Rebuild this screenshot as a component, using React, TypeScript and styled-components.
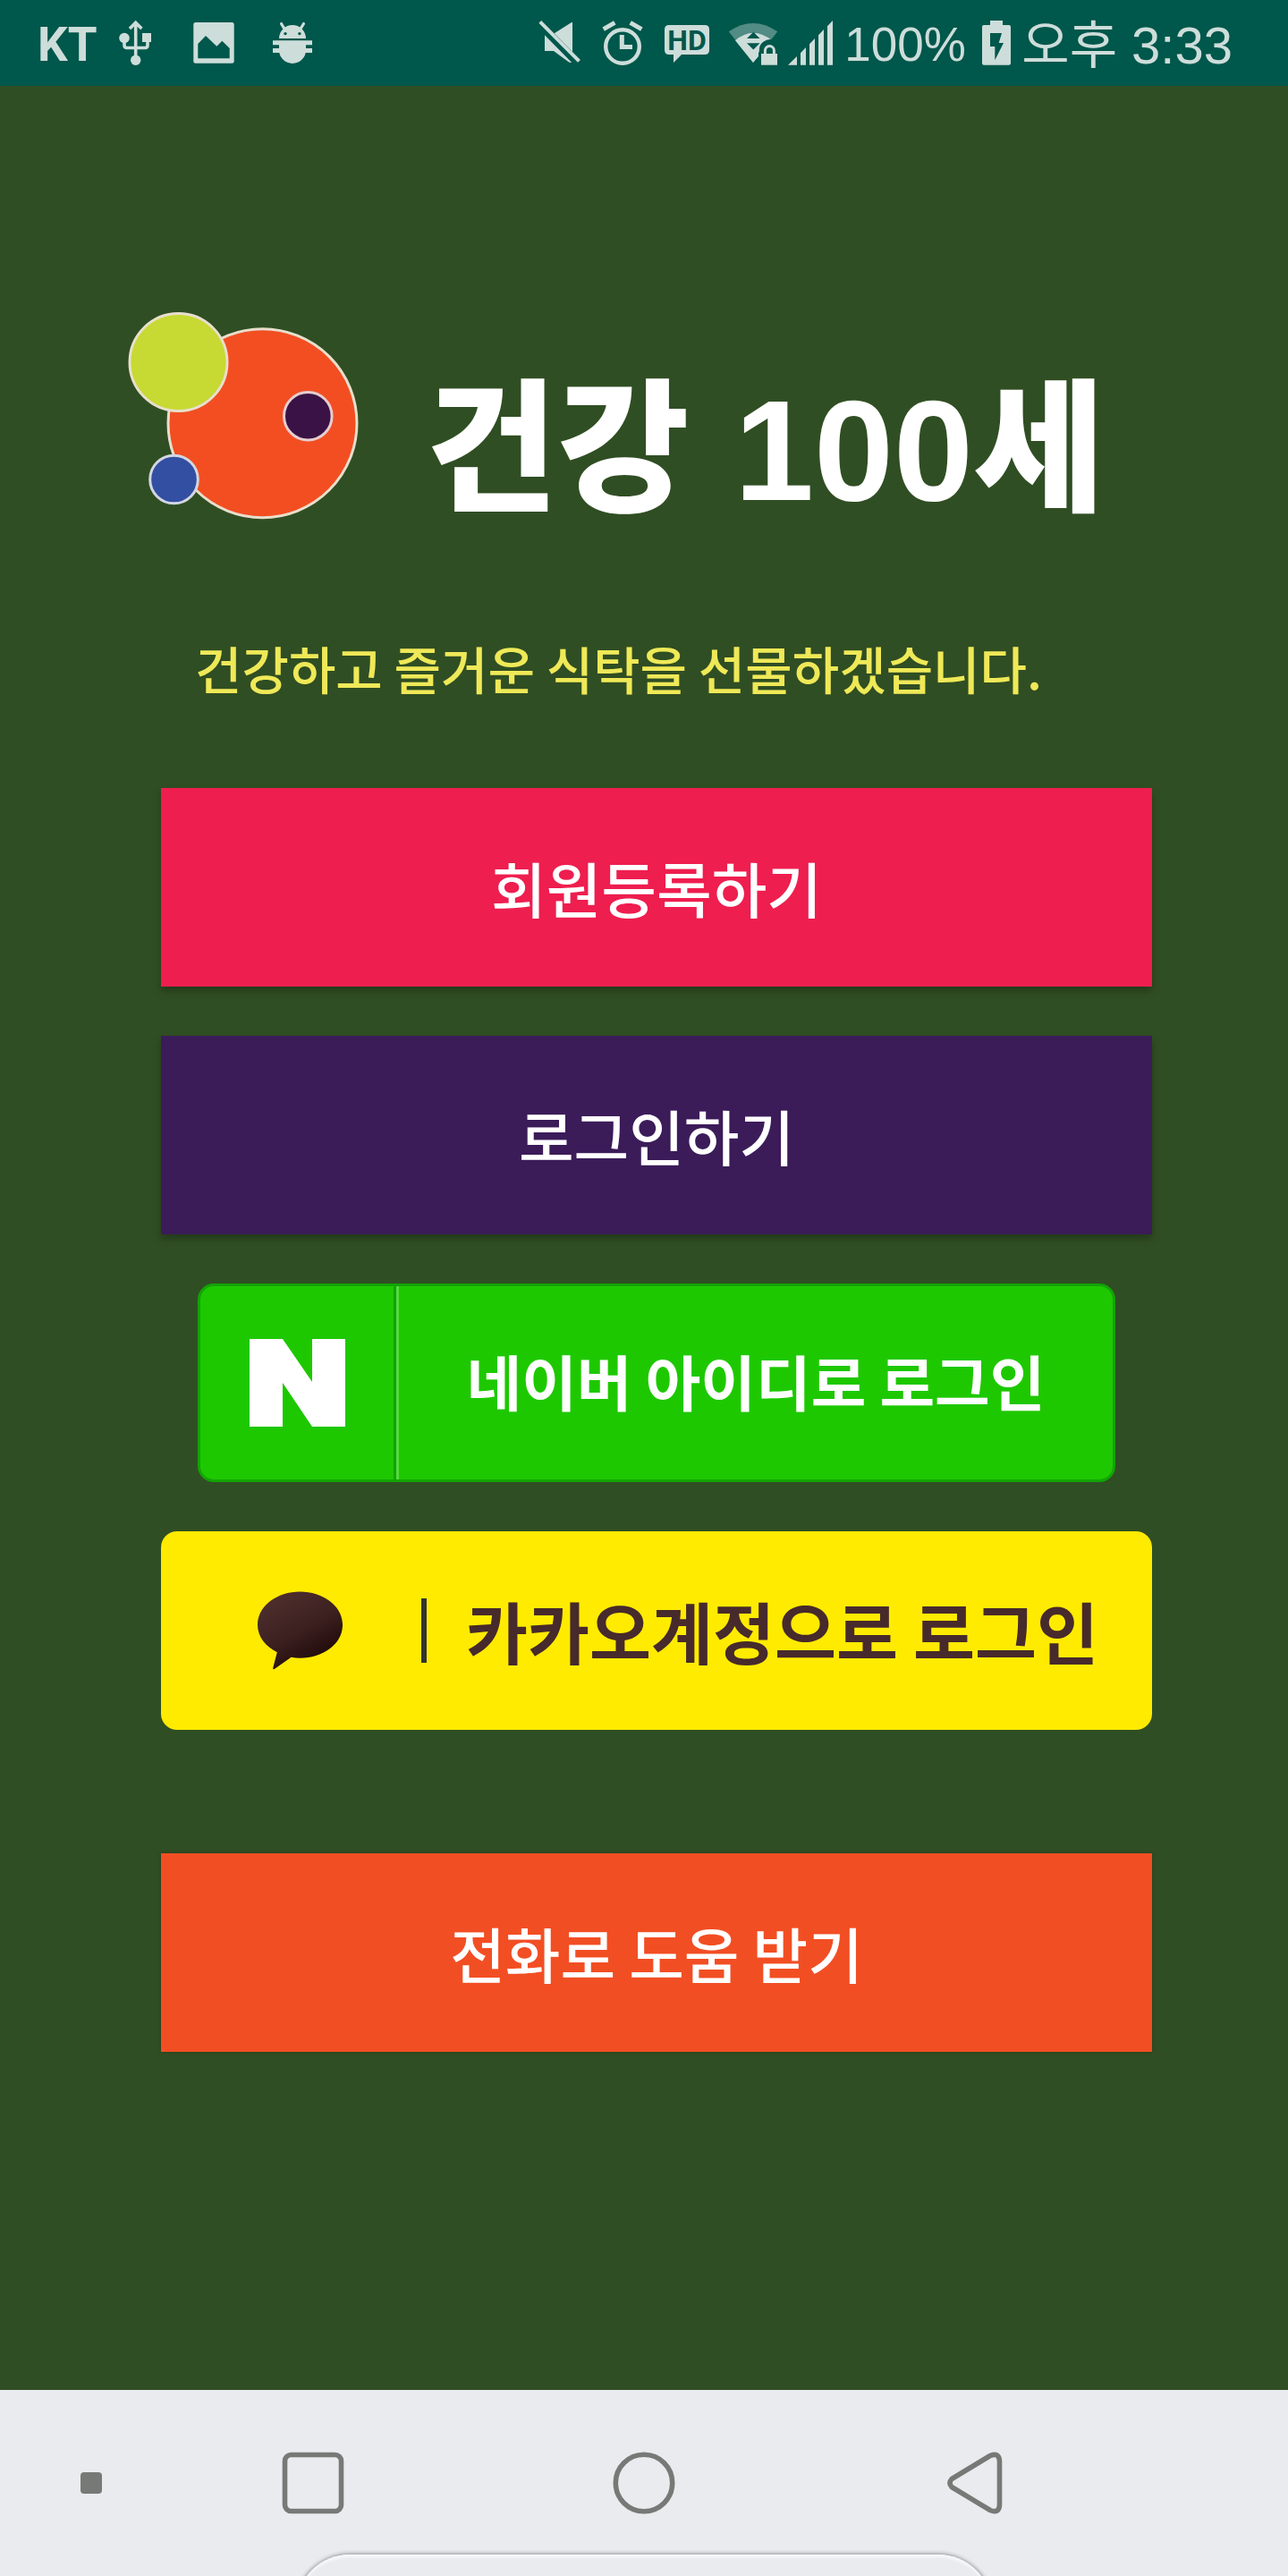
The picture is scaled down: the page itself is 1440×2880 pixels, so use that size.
import React from 'react';
import styled, { createGlobalStyle } from 'styled-components';

const color = {
  status: '#00574b',
  statusInk: '#cdddda',
  page: '#304e23',
  tagline: '#efe958',
  join: '#ee1e4f',
  login: '#3b1c59',
  help: '#f24e23',
  naver: '#1ec800',
  naverEdge: '#12a405',
  kakao: '#ffeb00',
  kakaoInk: '#472a2b',
  nav: '#e9ebee',
  navInk: '#777977',
};

const GlobalStyle = createGlobalStyle`
  *, *::before, *::after { box-sizing: border-box; }
  body {
    margin: 0;
    background: ${color.page};
    font-family: "Noto Sans CJK KR", "Noto Sans", sans-serif;
  }
  button {
    border: 0;
    padding: 0;
    background: none;
    font: inherit;
    color: inherit;
    cursor: pointer;
  }
`;

const Screen = styled.div`
  display: flex;
  flex-direction: column;
  min-height: 100vh;
`;

/* Status bar */

const StatusBar = styled.header`
  display: flex;
  align-items: center;
  justify-content: space-between;
  height: 96px;
  padding: 0 62px 0 42px;
  background: ${color.status};
  color: ${color.statusInk};
  font-family: "Liberation Sans", "Noto Sans CJK KR", sans-serif;
  white-space: nowrap;
`;

const StatusGroup = styled.div`
  display: flex;
  align-items: center;
`;

const Carrier = styled.span`
  width: 78px;
  font-family: Roboto, sans-serif;
  font-size: 53px;
  font-weight: 700;
  line-height: 64px;
  padding-top: 4px;
`;

const Percent = styled.span`
  width: 144px;
  padding: 4px 0 0 6px;
  font-size: 53px;
  line-height: 64px;
`;

const Clock = styled.time`
  padding-top: 6px;
  font-size: 58px;
  line-height: 64px;
`;

const Glyph = styled.svg`
  display: block;
  flex: none;
  height: 96px;
`;

type StatusIconProps = { x: number; width: number; label: string; children: React.ReactNode };

function StatusIcon({ x, width, label, children }: StatusIconProps) {
  return (
    <Glyph
      role="img"
      aria-label={label}
      width={width}
      viewBox={`${x} 0 ${width} 96`}
      fill={color.statusInk}
      stroke="none"
    >
      {children}
    </Glyph>
  );
}

const UsbIcon = () => (
  <StatusIcon x={120} width={66} label="USB">
    <g fill="none" stroke={color.statusInk} strokeWidth="3.6">
      <path d="M151.7 25V64M145 32l6.7-6.6 6.7 6.6" />
      <path d="M139 43v7.500q0 3 3 3h20q3 0 3-3V43" />
    </g>
    <circle cx="139" cy="42.500" r="5.800" />
    <circle cx="151.700" cy="67.300" r="5.700" />
    <rect x="159" y="37" width="10" height="10" />
  </StatusIcon>
);

const PictureIcon = () => (
  <StatusIcon x={186} width={100} label="사진">
    <rect x="216.300" y="25" width="45.400" height="45.700" rx="2.500" />
    <path
      fill={color.status}
      d="M221.300 49 230 40l12.300 11.700 6-6 8.400 8.300v11.300h-35.400z"
    />
  </StatusIcon>
);

const DebugIcon = () => (
  <StatusIcon x={286} width={80} label="디버깅">
    <path d="M312 43a15 15 0 0 1 30 0z" />
    <path
      d="M314.500 26.500 318.500 33M339.500 26.500 335.500 33"
      stroke={color.statusInk}
      strokeWidth="3.200"
      strokeLinecap="round"
    />
    <circle cx="319" cy="37.600" r="1.700" fill={color.status} />
    <circle cx="334.900" cy="37.600" r="1.700" fill={color.status} />
    <path d="M305 45.300h44v5h-44zM305 54h44v5h-44zM312 45.300h30V56a15 15 0 0 1-30 0z" />
  </StatusIcon>
);

const MuteIcon = () => (
  <StatusIcon x={600} width={60} label="무음">
    <path d="M619.700 37.300 639 25h1v33zM609 39.300 639.300 70q-3 0-4.600-1.500L619 57h-10z" />
    <path d="M603.800 24.300 647.500 68.300" stroke={color.statusInk} strokeWidth="4" />
  </StatusIcon>
);

const AlarmIcon = () => (
  <StatusIcon x={660} width={72} label="알람">
    <g fill="none" stroke={color.statusInk}>
      <circle cx="696" cy="52" r="18.800" strokeWidth="4.400" />
      <path d="M695.300 39v13.500H707" strokeWidth="5" />
      <path d="M674.700 32.700 687.300 25.300M704.700 25.300 717.300 32.700" strokeWidth="5" />
    </g>
  </StatusIcon>
);

const HdIcon = () => (
  <StatusIcon x={732} width={72} label="HD 음성">
    <path d="M748 28h40q5 0 5 5v23q0 5-5 5h-26l-9 9v-9h-5q-5 0-5-5V33q0-5 5-5z" />
    <text
      x="768"
      y="56"
      textAnchor="middle"
      fontFamily="Roboto, sans-serif"
      fontSize="32"
      fontWeight="700"
      fill={color.status}
    >
      HD
    </text>
  </StatusIcon>
);

const WifiIcon = () => (
  <StatusIcon x={804} width={72} label="와이파이">
    <path opacity="0.400" d="M814.700 35.300q27-18.600 54.600 0L842 70z" fill={color.statusInk} />
    <path d="M822 45.200q20-17 41 0L842 70z" />
    <path
      fill={color.status}
      d="M842.300 35.700l7.200 7.300h-14.500zM835 48.200h14.500l-7.200 7.200z"
    />
    <path
      fill={color.status}
      d="M848 74V59q1-1 1-4 0-5 4-8t8-3q6 0 10 4v26z"
    />
    <rect x="851" y="60" width="18" height="12.700" />
    <path
      d="M855.400 61v-4.500a5 5 0 0 1 10 0V61"
      fill="none"
      stroke={color.statusInk}
      strokeWidth="3"
    />
  </StatusIcon>
);

const SignalIcon = () => (
  <StatusIcon x={876} width={62} label="신호 세기">
    <path d="M881 72.700 891 63v9.700zM895 59.300 901 53v19.700h-6zM905 49.300 911 43v29.700h-6zM915 39.300 921 33v39.700h-6zM925 29.300 931 23v49.700h-6z" />
  </StatusIcon>
);

const BatteryIcon = () => (
  <StatusIcon x={1082} width={60} label="충전 중">
    <path d="M1107 23h14v5h7q2 0 2 2v40.700q0 2-2 2h-28q-2 0-2-2V30q0-2 2-2h7z" />
    <path fill={color.status} d="M1107 37h13l-3.300 11h5.300l-9.700 19.300V52h-5.300z" />
  </StatusIcon>
);

/* Content */

const Content = styled.main`
  flex: 1;
  display: flex;
  flex-direction: column;
  padding: 250px 152px 56px 142px;
`;

const Brand = styled.h1`
  display: flex;
  align-items: center;
  gap: 72px;
  height: 236px;
  margin: 0;
  color: #ffffff;
  font-size: 160px;
  font-weight: 900;
  line-height: 236px;
  white-space: nowrap;
`;

const BrandMark = styled.svg`
  display: block;
  flex: none;
  width: 262px;
  height: 236px;
`;

const BrandName = styled.span`
  padding-top: 64px;
`;

const BrandNumber = styled.span`
  margin-left: 14px;
  font-family: "Liberation Sans", sans-serif;
  font-weight: 700;
`;

const Tagline = styled.p`
  margin: 122px 0 93px 76px;
  color: ${color.tagline};
  font-size: 57px;
  font-weight: 500;
  line-height: 84px;
`;

const Actions = styled.div`
  display: flex;
  flex-direction: column;
  gap: 55px;
  padding-left: 38px;
`;

const ActionButton = styled.button<{ $fill: string; $raised?: boolean; $apart?: boolean }>`
  height: 222px;
  margin-top: ${({ $apart }) => ($apart ? '83px' : '0')};
  background: ${({ $fill }) => $fill};
  box-shadow: ${({ $raised }) =>
    $raised ? '0 5px 8px rgba(0, 0, 0, 0.26)' : '0 0 4px rgba(0, 0, 0, 0.2)'};
  color: #ffffff;
  font-size: 67px;
  font-weight: 500;
  line-height: 96px;
`;

const NaverButton = styled.button`
  display: flex;
  height: 222px;
  margin: 0 41px;
  border: 3px solid ${color.naverEdge};
  border-radius: 18px;
  background: ${color.naver};
  color: #ffffff;
  font-size: 67px;
  font-weight: 700;
  line-height: 96px;
`;

const NaverMark = styled.span`
  display: flex;
  align-items: center;
  justify-content: center;
  width: 219px;
  height: 100%;
  border-right: 3px solid ${color.naverEdge};
`;

const NaverLabel = styled.span`
  flex: 1;
  display: flex;
  align-items: center;
  justify-content: center;
  height: 100%;
  padding-bottom: 6px;
  border-left: 3px solid #55d940;
`;

const KakaoButton = styled.button`
  display: flex;
  align-items: center;
  height: 222px;
  padding: 0 60px 0 108px;
  border-radius: 18px;
  background: ${color.kakao};
  color: ${color.kakaoInk};
  font-size: 75px;
  font-weight: 700;
  line-height: 108px;
  white-space: nowrap;
`;

const KakaoDivider = styled.span`
  width: 6px;
  height: 72px;
  margin: 0 44px 0 88px;
  background: #333333;
`;

/* Navigation bar */

const NavBar = styled.nav`
  display: flex;
  flex-direction: column;
  height: 208px;
  background: ${color.nav};
  color: ${color.navInk};
`;

const NavKeys = styled.div`
  flex: 1;
  display: grid;
  grid-template-columns: 165fr 370fr 370fr 370fr 165fr;
  padding-top: 34px;
`;

const NavKey = styled.button<{ $inset?: number }>`
  display: flex;
  align-items: center;
  justify-content: center;
  padding-left: ${({ $inset = 0 }) => $inset}px;
`;

const SheetEdge = styled.div`
  height: 34px;
  padding-top: 10px;
  overflow: hidden;
`;

const Sheet = styled.div`
  width: 54%;
  height: 120px;
  margin: 0 auto;
  border-radius: 60px;
  background: ${color.nav};
  box-shadow: 0 0 4px 1px #8f9191, inset 0 3px 3px #f8f9fa;
`;

export default function App() {
  return (
    <Screen>
      <GlobalStyle />
      <StatusBar>
        <StatusGroup>
          <Carrier>KT</Carrier>
          <UsbIcon />
          <PictureIcon />
          <DebugIcon />
        </StatusGroup>
        <StatusGroup>
          <MuteIcon />
          <AlarmIcon />
          <HdIcon />
          <WifiIcon />
          <SignalIcon />
          <Percent>100%</Percent>
          <BatteryIcon />
          <Clock>오후 3:33</Clock>
        </StatusGroup>
      </StatusBar>

      <Content>
        <Brand>
          <BrandMark viewBox="142 346 262 236" aria-hidden="true" stroke="#e8dfcc" strokeWidth="3">
            <circle cx="293.500" cy="473.200" r="105.500" fill="#f24e22" />
            <circle cx="199.500" cy="405" r="54.500" fill="#c7d933" />
            <circle cx="344.300" cy="465.200" r="26.800" fill="#3b1245" stroke="#e6cdd0" />
            <circle cx="194.500" cy="536" r="26.800" fill="#334fa2" stroke="#d3d7e2" />
          </BrandMark>
          <BrandName>
            건강 <BrandNumber>100</BrandNumber>세
          </BrandName>
        </Brand>
        <Tagline>건강하고 즐거운 식탁을 선물하겠습니다.</Tagline>
        <Actions>
          <ActionButton type="button" $fill={color.join} $raised>
            회원등록하기
          </ActionButton>
          <ActionButton type="button" $fill={color.login} $raised>
            로그인하기
          </ActionButton>
          <NaverButton type="button">
            <NaverMark>
              <svg width="107" height="98" viewBox="0 0 107 98" fill="#ffffff" aria-hidden="true">
                <path d="M0 0h37l33 48V0h37v98H70L37 49v49H0z" />
              </svg>
            </NaverMark>
            <NaverLabel>네이버 아이디로 로그인</NaverLabel>
          </NaverButton>
          <KakaoButton type="button">
            <svg width="96" height="88" viewBox="0 0 96 88" aria-hidden="true">
              <defs>
                <linearGradient id="bubble" x1="0.200" y1="0" x2="0.800" y2="1">
                  <stop offset="0" stopColor="#50302f" />
                  <stop offset="0.500" stopColor="#3b201f" />
                  <stop offset="0.850" stopColor="#230c0c" />
                </linearGradient>
              </defs>
              <path
                fill="url(#bubble)"
                d="M48 0C74 0 96 16 96 37.500S74 75 48 75q-5 0-10-1L19 87.500q-2 .8-1.500-1.500L22 68.500C9 62 0 51 0 37.500 0 16 22 0 48 0z"
              />
            </svg>
            <KakaoDivider />
            카카오계정으로 로그인
          </KakaoButton>
          <ActionButton type="button" $fill={color.help} $apart>
            전화로 도움 받기
          </ActionButton>
        </Actions>
      </Content>

      <NavBar aria-label="시스템 탐색">
        <NavKeys>
          <NavKey type="button" aria-label="탐색 표시줄 숨기기" $inset={39}>
            <svg width="24" height="24" viewBox="0 0 24 24" fill="currentColor">
              <rect width="24" height="24" rx="4" />
            </svg>
          </NavKey>
          <NavKey type="button" aria-label="최근 앱">
            <svg width="70" height="70" viewBox="0 0 70 70" fill="none" stroke="currentColor" strokeWidth="5.600">
              <rect x="3.500" y="3.500" width="63" height="63" rx="7" />
            </svg>
          </NavKey>
          <NavKey type="button" aria-label="홈">
            <svg width="70" height="70" viewBox="0 0 70 70" fill="none" stroke="currentColor" strokeWidth="5.600">
              <circle cx="35" cy="35" r="31.700" />
            </svg>
          </NavKey>
          <NavKey type="button" aria-label="뒤로">
            <svg width="62" height="70" viewBox="0 0 62 70" fill="none" stroke="currentColor" strokeWidth="5.600">
              <path d="M48 4.500 5 30.500q-4 4.500 0 9L48 65.500q10 4 10.500-6v-49q-.5-10-10.500-6z" />
            </svg>
          </NavKey>
        </NavKeys>
        <SheetEdge>
          <Sheet />
        </SheetEdge>
      </NavBar>
    </Screen>
  );
}
